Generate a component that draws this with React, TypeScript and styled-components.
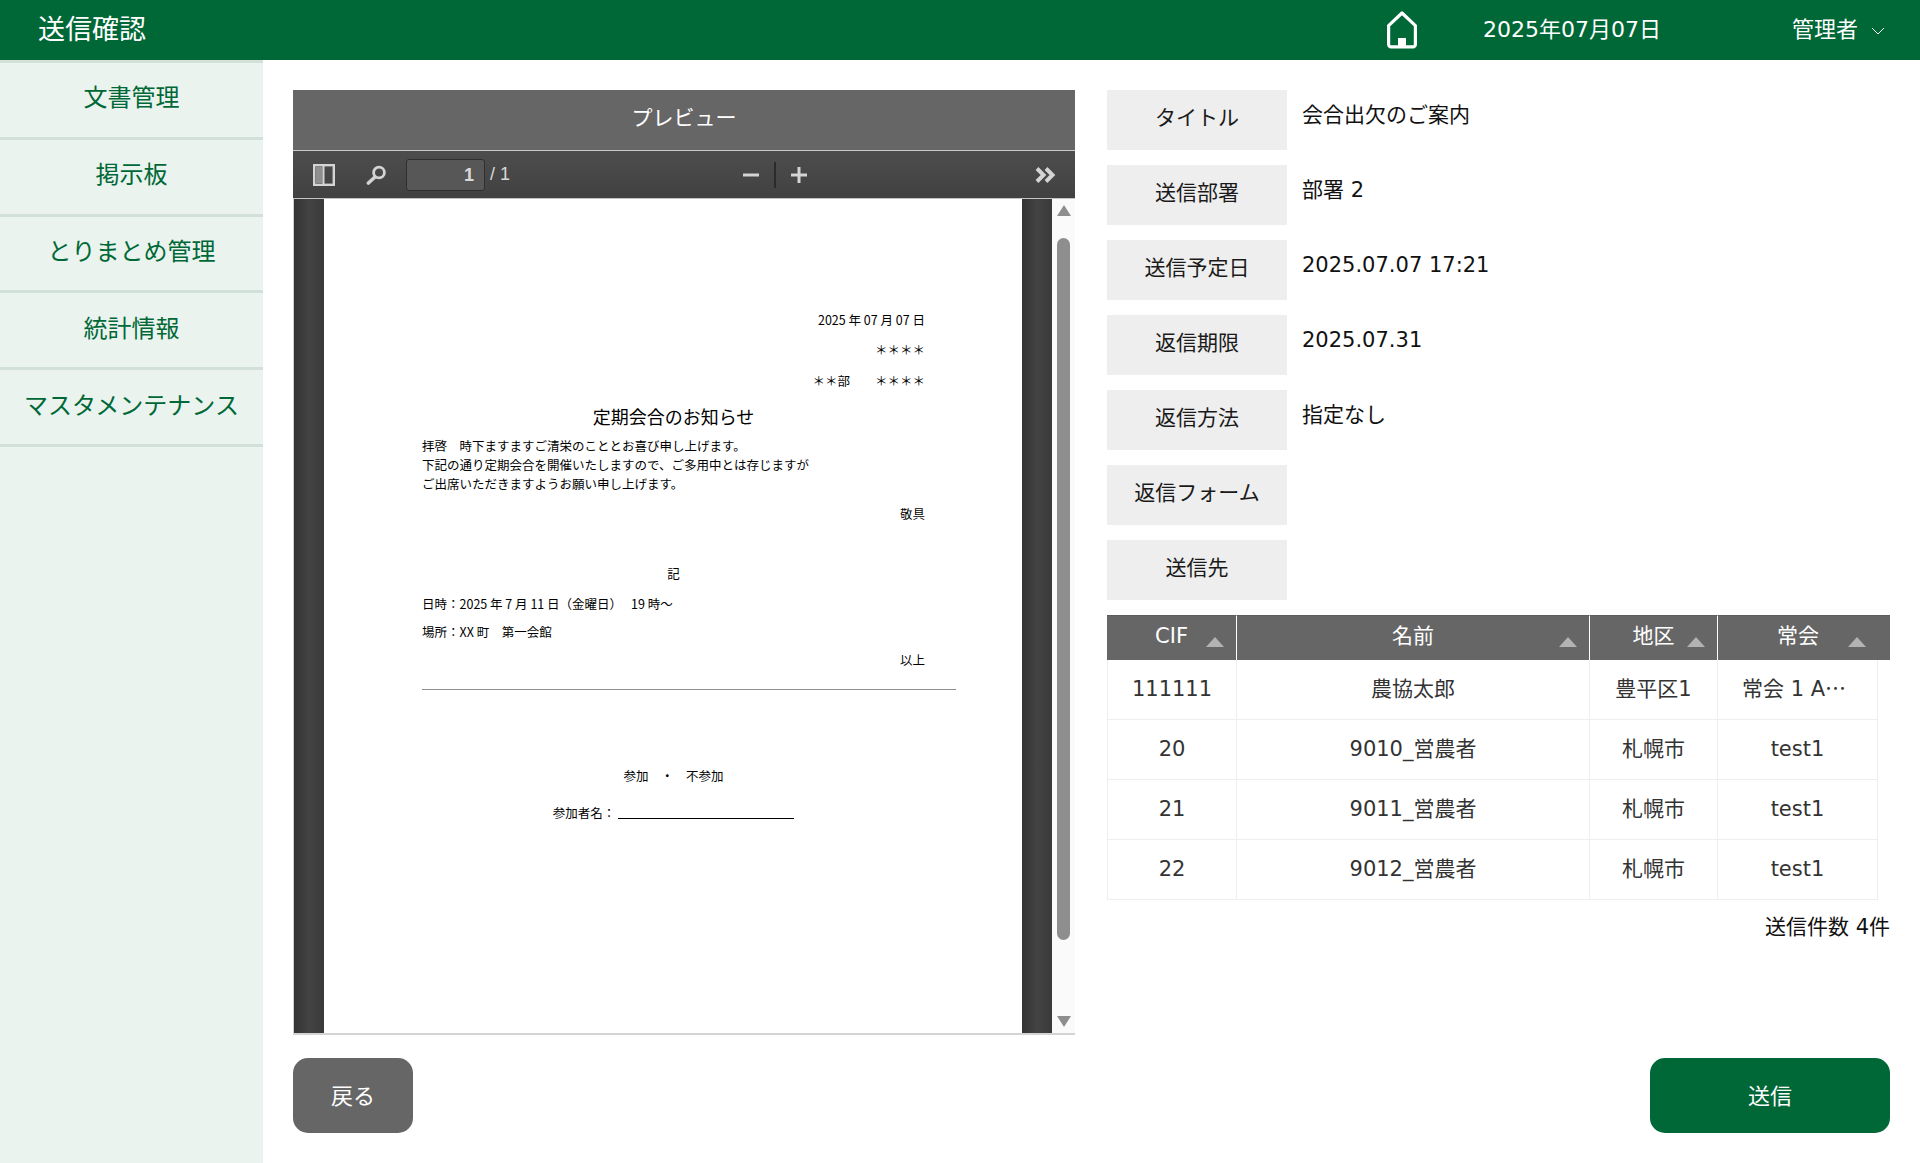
import styled, { createGlobalStyle } from "styled-components";

const GREEN = "#006837";
const GRAY = "#666666";

const GlobalStyle = createGlobalStyle`
  html, body {
    margin: 0;
    padding: 0;
    background: #fff;
  }
  body {
    font-family: "DejaVu Sans", "Noto Sans CJK JP", sans-serif;
    overflow: hidden;
  }
  * {
    box-sizing: border-box;
  }
`;

const NAV_ITEMS = ["文書管理", "掲示板", "とりまとめ管理", "統計情報", "マスタメンテナンス"];

const INFO_ROWS = [
  { label: "タイトル", value: "会合出欠のご案内" },
  { label: "送信部署", value: "部署 2" },
  { label: "送信予定日", value: "2025.07.07 17:21" },
  { label: "返信期限", value: "2025.07.31" },
  { label: "返信方法", value: "指定なし" },
  { label: "返信フォーム", value: "" },
  { label: "送信先", value: "" },
];

const RECIPIENTS = [
  { cif: "111111", name: "農協太郎", area: "豊平区1", group: "常会 1 A地区" },
  { cif: "20", name: "9010_営農者", area: "札幌市", group: "test1" },
  { cif: "21", name: "9011_営農者", area: "札幌市", group: "test1" },
  { cif: "22", name: "9012_営農者", area: "札幌市", group: "test1" },
];

const Page = styled.div`
  width: 100%;
  height: 1163px;
  display: flex;
  flex-direction: column;
`;

const TopBar = styled.header`
  height: 60px;
  flex: none;
  display: flex;
  align-items: center;
  background: ${GREEN};
  color: #fff;
  padding: 0 35px 0 38px;
`;

const PageTitle = styled.h1`
  margin: 0 0 6px;
  font-size: 27px;
  font-weight: 400;
  flex: 1;
`;

const HomeIcon = styled.svg`
  width: 32px;
  height: 38px;
  display: block;
  margin-right: 65px;
`;

const DateText = styled.span`
  font-size: 22px;
  width: 309px;
  padding-bottom: 6px;
`;

const UserName = styled.span`
  font-size: 22px;
  margin-right: 13px;
  padding-bottom: 6px;
`;

const Chevron = styled.svg`
  width: 14px;
  height: 8px;
  margin-top: 1px;
`;

const Body = styled.div`
  flex: 1;
  display: flex;
  min-height: 0;
`;

const SideNav = styled.nav`
  width: 263px;
  flex: none;
  background: #eaf3ee;
  border-top: 3px solid #d1e1da;
`;

const NavItem = styled.div`
  height: 76.8px;
  display: flex;
  align-items: center;
  justify-content: center;
  border-bottom: 3px solid #d1e1da;
  color: ${GREEN};
  font-size: 24px;
  padding-bottom: 8px;
`;

const Main = styled.main`
  flex: 1;
  display: grid;
  grid-template-columns: 782px 783px;
  grid-template-rows: 945px 75px;
  column-gap: 32px;
  row-gap: 23px;
  padding: 30px 30px 0;
`;

const PreviewPanel = styled.section`
  display: flex;
  flex-direction: column;
  min-height: 0;
  border-bottom: 2px solid #d4d4d4;
`;

const PreviewTitle = styled.div`
  height: 60px;
  flex: none;
  display: flex;
  align-items: center;
  justify-content: center;
  background: ${GRAY};
  color: #fff;
  font-size: 21px;
  padding-bottom: 8px;
`;

const ViewerBar = styled.div`
  height: 49px;
  flex: none;
  display: flex;
  align-items: center;
  background: linear-gradient(#4d4d4d, #414141);
  border-top: 1px solid #c9c9c9;
  border-bottom: 1px solid #c4c4c4;
  color: #d9d9d9;
  padding-left: 20px;
  font-family: "Liberation Sans", sans-serif;
  font-size: 18px;
`;

const BarIcon = styled.svg<{ $mr?: number; $ml?: number }>`
  display: block;
  flex: none;
  margin-left: ${(p) => p.$ml ?? 0}px;
  margin-right: ${(p) => p.$mr ?? 0}px;
`;

const PageInput = styled.div`
  width: 79px;
  height: 32px;
  flex: none;
  background: #575757;
  border: 1px solid #2f2f2f;
  border-radius: 3px;
  text-align: right;
  padding-right: 10px;
  line-height: 30px;
  font-weight: 700;
  margin-right: 5px;
`;

const PageCount = styled.span`
  width: 253px;
  white-space: nowrap;
`;

const BarDivider = styled.span`
  width: 2px;
  height: 26px;
  flex: none;
  background: #2b2b2b;
  margin: 0 15px 0 15px;
`;

const ViewerBody = styled.div`
  flex: 1;
  display: flex;
  min-height: 0;
  border-left: 1px solid #cfcfcf;
`;

const Gutter = styled.div<{ $w: number }>`
  width: ${(p) => p.$w}px;
  flex: none;
  background: linear-gradient(90deg, #333 0, #434343 50%, #3a3a3a 100%);
`;

const DocPage = styled.div`
  flex: 1;
  background: #fff;
  color: #000;
  font-size: 12.5px;
  padding: 111px 97px 0 98px;
  overflow: hidden;
`;

const DocLine = styled.div<{ $mt?: number; $align?: string; $size?: number }>`
  height: 20px;
  line-height: 20px;
  white-space: nowrap;
  margin-top: ${(p) => p.$mt ?? 0}px;
  text-align: ${(p) => p.$align ?? "left"};
  font-size: ${(p) => p.$size ?? 12.5}px;
  font-family: "Noto Sans CJK JP", sans-serif;
`;

const DocBody = styled.div`
  margin-top: 10px;
  line-height: 19px;
  font-family: "Noto Sans CJK JP", sans-serif;
  white-space: nowrap;
`;

const DocRule = styled.div`
  height: 1px;
  background: #8f8f8f;
  margin: 19px -31px 0 0;
`;

const SignLine = styled.span`
  display: inline-block;
  width: 176px;
  height: 1px;
  background: #000;
  margin-left: 3px;
  vertical-align: -1px;
`;

const ScrollTrack = styled.div`
  width: 23px;
  flex: none;
  background: #fafafa;
  display: flex;
  flex-direction: column;
  align-items: center;
  padding: 6px 0 6px;
`;

const ScrollArrow = styled.div<{ $down?: boolean }>`
  width: 0;
  height: 0;
  flex: none;
  border-left: 7.5px solid transparent;
  border-right: 7.5px solid transparent;
  ${(p) =>
    p.$down
      ? `border-top: 11px solid #8e8e8e; margin-top: auto;`
      : `border-bottom: 11px solid #8e8e8e;`}
`;

const ScrollThumb = styled.div`
  width: 13px;
  height: 702px;
  flex: none;
  margin-top: 22px;
  background: #8e8e8e;
  border-radius: 7px;
`;

const RightColumn = styled.section`
  display: flex;
  flex-direction: column;
  gap: 15px;
`;

const InfoRow = styled.div`
  height: 60px;
  display: flex;
`;

const InfoLabel = styled.div`
  width: 180px;
  flex: none;
  display: flex;
  align-items: center;
  justify-content: center;
  background: #eeeeee;
  color: #1a1a1a;
  font-size: 21px;
  padding: 0 0 9px;
`;

const InfoValue = styled.div`
  padding: 9px 0 0 15px;
  color: #111;
  font-size: 21px;
  line-height: 32px;
`;

const TableBlock = styled.div``;

const HeadTable = styled.table`
  width: 783px;
  table-layout: fixed;
  border-collapse: separate;
  border-spacing: 0;
`;

const BodyTable = styled(HeadTable)`
  width: 771px;
`;

const Th = styled.th<{ $last?: boolean }>`
  position: relative;
  height: 45px;
  padding: 5px ${(p) => (p.$last ? 12 : 0)}px 0 0;
  background: ${GRAY};
  color: #fff;
  font-size: 21px;
  line-height: 30px;
  font-weight: 400;
  text-align: center;
  vertical-align: baseline;
  border-right: ${(p) => (p.$last ? "none" : "1px solid #fff")};
  border-top: 1px solid #5c5c5c;
`;

const SortMark = styled.span<{ $right: number }>`
  position: absolute;
  right: ${(p) => p.$right}px;
  bottom: 13px;
  width: 0;
  height: 0;
  border-left: 9px solid transparent;
  border-right: 9px solid transparent;
  border-bottom: 10px solid #b3b3b3;
`;

const Td = styled.td<{ $first?: boolean; $clip?: boolean }>`
  height: 60px;
  padding: ${(p) => (p.$clip ? "12px 24px 0" : "14px 10px 0")};
  text-align: center;
  vertical-align: baseline;
  color: #333;
  font-size: 21px;
  line-height: 30px;
  white-space: nowrap;
  overflow: hidden;
  text-overflow: ellipsis;
  font-family: ${(p) =>
    p.$clip ? '"Noto Sans CJK JP", sans-serif' : "inherit"};
  border-right: 1px solid #eeeeee;
  border-bottom: 1px solid #eeeeee;
  border-left: ${(p) => (p.$first ? "1px solid #eeeeee" : "none")};
`;

const GroupText = styled.span`
  font-family: "DejaVu Sans", "Noto Sans CJK JP", sans-serif;
`;

const TotalLine = styled.div`
  text-align: right;
  font-size: 21px;
  color: #111;
  margin-top: 10px;
`;

const FooterCell = styled.div<{ $end?: boolean }>`
  display: flex;
  justify-content: ${(p) => (p.$end ? "flex-end" : "flex-start")};
`;

const ActionButton = styled.button<{ $primary?: boolean }>`
  width: ${(p) => (p.$primary ? 240 : 120)}px;
  height: 75px;
  border: none;
  border-radius: 15px;
  background: ${(p) => (p.$primary ? GREEN : GRAY)};
  color: #fff;
  font-family: inherit;
  font-size: 22px;
  padding: 0 0 3px;
`;

const COLUMNS = [130, 353, 128, 160];

const HEADS = [
  { label: "CIF", right: 12 },
  { label: "名前", right: 12 },
  { label: "地区", right: 12 },
  { label: "常会", right: 24 },
];

const HomeGlyph = () => (
  <HomeIcon viewBox="0 0 32 38" fill="none" stroke="#fff" strokeWidth="3.2" strokeLinejoin="round">
    <path d="M16 2 L2.6 14.6 V33.5 a2.4 2.4 0 0 0 2.4 2.4 H27 a2.4 2.4 0 0 0 2.4 -2.4 V14.6 Z" />
    <rect x="12" y="27" width="8" height="8" fill="#fff" stroke="none" />
  </HomeIcon>
);

const SidebarToggle = () => (
  <BarIcon $mr={31} width="22" height="22" viewBox="0 0 22 22">
    <rect x="1.2" y="1.2" width="19.6" height="19.6" fill="none" stroke="#d4d4d4" strokeWidth="2.4" />
    <rect x="3" y="3" width="6.5" height="16" fill="#8f8f8f" />
    <rect x="9.5" y="2" width="2" height="18" fill="#d4d4d4" />
  </BarIcon>
);

const SearchGlyph = () => (
  <BarIcon $mr={19} width="21" height="20" viewBox="0 0 21 20" fill="none" stroke="#d4d4d4">
    <circle cx="13" cy="7.5" r="5.4" strokeWidth="2.8" />
    <path d="M9 12 L2.4 18" strokeWidth="3.6" strokeLinecap="round" />
  </BarIcon>
);

const App = () => {
  return (
    <Page>
      <GlobalStyle />
      <TopBar>
        <PageTitle>送信確認</PageTitle>
        <HomeGlyph />
        <DateText>2025年07月07日</DateText>
        <UserName>管理者</UserName>
        <Chevron viewBox="0 0 14 8" fill="none" stroke="#fff" strokeWidth="1">
          <path d="M1 1 L7 7 L13 1" />
        </Chevron>
      </TopBar>
      <Body>
        <SideNav>
          {NAV_ITEMS.map((item) => (
            <NavItem key={item}>{item}</NavItem>
          ))}
        </SideNav>
        <Main>
          <PreviewPanel>
            <PreviewTitle>プレビュー</PreviewTitle>
            <ViewerBar>
              <SidebarToggle />
              <SearchGlyph />
              <PageInput>1</PageInput>
              <PageCount>/ 1</PageCount>
              <BarIcon width="16" height="4" viewBox="0 0 16 4">
                <rect width="16" height="3" y="0.5" fill="#d4d4d4" />
              </BarIcon>
              <BarDivider />
              <BarIcon width="16" height="16" viewBox="0 0 16 16">
                <path d="M6.5 0h3v6.5H16v3H9.5V16h-3V9.5H0v-3h6.5z" fill="#d4d4d4" />
              </BarIcon>
              <BarIcon $ml={228} width="21" height="16" viewBox="0 0 21 16" fill="none" stroke="#d4d4d4" strokeWidth="4">
                <path d="M2 1.5 L8.5 8 L2 14.5" />
                <path d="M11 1.5 L17.5 8 L11 14.5" />
              </BarIcon>
            </ViewerBar>
            <ViewerBody>
              <Gutter $w={30} />
              <DocPage>
                <DocLine $align="right">2025 年 07 月 07 日</DocLine>
                <DocLine $align="right" $mt={10}>＊＊＊＊</DocLine>
                <DocLine $align="right" $mt={11}>＊＊部　　＊＊＊＊</DocLine>
                <DocLine $align="center" $mt={15} $size={18}>定期会合のお知らせ</DocLine>
                <DocBody>
                  拝啓　時下ますますご清栄のこととお喜び申し上げます。
                  <br />
                  下記の通り定期会合を開催いたしますので、ご多用中とは存じますが
                  <br />
                  ご出席いただきますようお願い申し上げます。
                </DocBody>
                <DocLine $align="right" $mt={11}>敬具</DocLine>
                <DocLine $align="center" $mt={40}>記</DocLine>
                <DocLine $mt={10}>日時：2025 年 7 月 11 日（金曜日）　 19 時～</DocLine>
                <DocLine $mt={8}>場所：XX 町　第一会館</DocLine>
                <DocLine $align="right" $mt={8}>以上</DocLine>
                <DocRule />
                <DocLine $align="center" $mt={76}>参加　・　不参加</DocLine>
                <DocLine $align="center" $mt={17}>
                  参加者名：<SignLine />
                </DocLine>
              </DocPage>
              <Gutter $w={30} />
              <ScrollTrack>
                <ScrollArrow />
                <ScrollThumb />
                <ScrollArrow $down />
              </ScrollTrack>
            </ViewerBody>
          </PreviewPanel>
          <RightColumn>
            {INFO_ROWS.map((row) => (
              <InfoRow key={row.label}>
                <InfoLabel>{row.label}</InfoLabel>
                <InfoValue>{row.value}</InfoValue>
              </InfoRow>
            ))}
            <TableBlock>
              <HeadTable>
                <colgroup>
                  <col style={{ width: 130 }} />
                  <col style={{ width: 353 }} />
                  <col style={{ width: 128 }} />
                  <col style={{ width: 172 }} />
                </colgroup>
                <thead>
                  <tr>
                    {HEADS.map((head, i) => (
                      <Th key={head.label} $last={i === HEADS.length - 1}>
                        {head.label}
                        <SortMark $right={head.right} />
                      </Th>
                    ))}
                  </tr>
                </thead>
              </HeadTable>
              <BodyTable>
                <colgroup>
                  {COLUMNS.map((width, i) => (
                    <col key={i} style={{ width }} />
                  ))}
                </colgroup>
                <tbody>
                  {RECIPIENTS.map((row) => (
                    <tr key={row.cif}>
                      <Td $first>{row.cif}</Td>
                      <Td>{row.name}</Td>
                      <Td>{row.area}</Td>
                      <Td $clip>
                        <GroupText>{row.group}</GroupText>
                      </Td>
                    </tr>
                  ))}
                </tbody>
              </BodyTable>
              <TotalLine>送信件数 4件</TotalLine>
            </TableBlock>
          </RightColumn>
          <FooterCell>
            <ActionButton>戻る</ActionButton>
          </FooterCell>
          <FooterCell $end>
            <ActionButton $primary>送信</ActionButton>
          </FooterCell>
        </Main>
      </Body>
    </Page>
  );
};

export default App;
